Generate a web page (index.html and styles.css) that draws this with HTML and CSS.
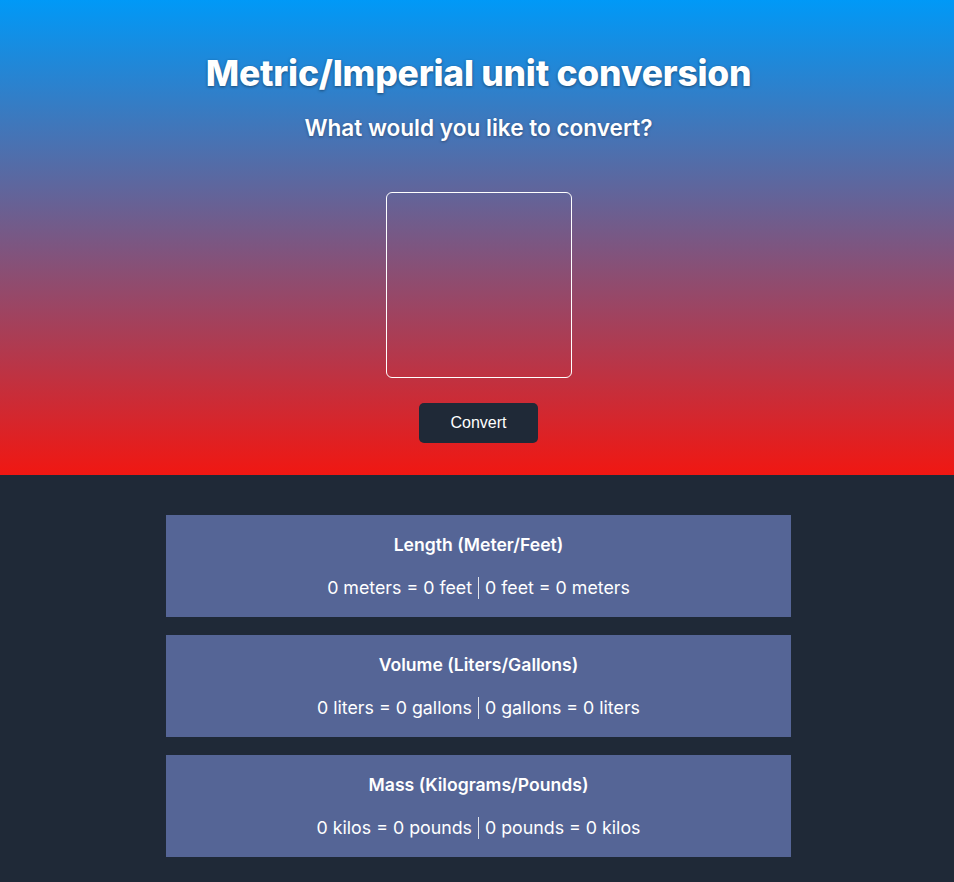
FILE: index.html
```html
<!DOCTYPE html>
<html lang="en">
<head>
<meta charset="utf-8">
<title>Unit conversion</title>
<link rel="stylesheet" href="styles.css">
</head>
<body>
<header class="hero">
  <h1 class="title">Metric/Imperial unit conversion</h1>
  <h2 class="subtitle">What would you like to convert?</h2>
  <input class="number-input" type="text" aria-label="Value">
  <button class="convert-btn">Convert</button>
</header>
<main class="results">
  <section class="card">
    <h3 class="card-title">Length (Meter/Feet)</h3>
    <p class="card-text">0 meters = 0 feet <span class="sep"></span> 0 feet = 0 meters</p>
  </section>
  <section class="card">
    <h3 class="card-title">Volume (Liters/Gallons)</h3>
    <p class="card-text">0 liters = 0 gallons <span class="sep"></span> 0 gallons = 0 liters</p>
  </section>
  <section class="card">
    <h3 class="card-title">Mass (Kilograms/Pounds)</h3>
    <p class="card-text">0 kilos = 0 pounds <span class="sep"></span> 0 pounds = 0 kilos</p>
  </section>
</main>
</body>
</html>
```
FILE: styles.css
```css
html, body {
  margin: 0;
  padding: 0;
}
body {
  background: #1f2937;
  font-family: Inter, "Noto Sans", sans-serif;
  color: #fff;
  min-height: 882px;
}
.hero {
  height: 475px;
  box-sizing: border-box;
  background: linear-gradient(180deg, #0099f7 0%, #f11712 100%);
  display: flex;
  flex-direction: column;
  align-items: center;
  padding-top: 52px;
  padding-left: 3px;
}
.title {
  margin: 0;
  font-size: 35.4px;
  font-weight: 800;
  line-height: 44px;
  text-shadow: 0 1px 3px rgba(0,0,0,0.45);
  letter-spacing: -0.2px;
}
.subtitle {
  margin: 18px 0 0;
  font-size: 22.6px;
  font-weight: 600;
  line-height: 28px;
  text-shadow: 0 1px 3px rgba(0,0,0,0.35);
}
.number-input {
  margin-top: 50px;
  width: 186px;
  height: 186px;
  box-sizing: border-box;
  background: transparent;
  border: 1px solid #fff;
  border-radius: 6px;
  outline: none;
  color: #fff;
  font-size: 40px;
  text-align: center;
}
.convert-btn {
  margin-top: 25px;
  width: 119px;
  height: 40px;
  border: none;
  border-radius: 5px;
  background: #1f2937;
  color: #fff;
  font-family: "Liberation Sans", Arial, sans-serif;
  font-size: 16px;
}
.results {
  display: flex;
  flex-direction: column;
  gap: 18px;
  width: 625px;
  margin: 40px auto 0;
  padding-left: 3px;
  padding-bottom: 25px;
}
.card {
  background: #556596;
  height: 102px;
  box-sizing: border-box;
  padding-top: 19px;
  text-align: center;
}
.card-title {
  margin: 0;
  font-size: 17.6px;
  font-weight: 600;
  line-height: 22px;
}
.card-text {
  margin: 20px 0 0;
  font-size: 17.8px;
  font-weight: 400;
  line-height: 24px;
}
.sep {
  display: inline-block;
  width: 0;
  height: 22px;
  border-left: 1px solid #e5e7eb;
  vertical-align: -5px;
  margin: 0 1px;
}
```
